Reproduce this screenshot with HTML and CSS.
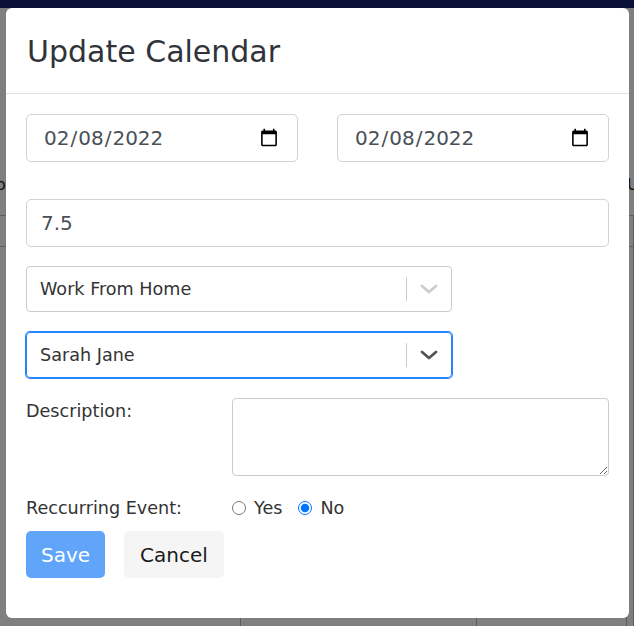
FILE: index.html
```html
<!DOCTYPE html>
<html lang="en">
<head>
    <meta charset="UTF-8">
    <meta name="viewport" content="width=device-width, initial-scale=1.0">
    <title>Update Calendar</title>
    <link rel="stylesheet" href="styles.css">
</head>
<body>

    <div class="page">
        <nav class="navbar"></nav>
        <div class="calendar-bg">
            <div class="bg-row bg-head"><span>o</span><span></span><span></span><span>U</span></div>
            <div class="bg-row"><span></span><span></span><span></span><span></span></div>
            <div class="bg-row bg-tall"><span></span><span></span><span></span><span></span></div>
        </div>
    </div>

    <div class="backdrop">
        <div class="modal">
            <div class="modal-header">
                <h2 class="modal-title">Update Calendar</h2>
            </div>

            <form class="modal-body">
                <div class="date-row">
                    <input type="date" class="form-control" value="2022-02-08">
                    <input type="date" class="form-control" value="2022-02-08">
                </div>

                <input type="number" class="form-control hours" value="7.5" step="0.5">

                <div class="select">
                    <div class="select-value">Work From Home</div>
                    <span class="select-sep"></span>
                    <span class="select-arrow">
                        <svg width="18" height="10" viewBox="0 0 18 10"><polyline points="2,2 9,8 16,2" fill="none" stroke="currentColor" stroke-width="2.8" stroke-linecap="round" stroke-linejoin="round"/></svg>
                    </span>
                </div>

                <div class="select select-focused">
                    <div class="select-value">Sarah Jane</div>
                    <span class="select-sep"></span>
                    <span class="select-arrow">
                        <svg width="18" height="10" viewBox="0 0 18 10"><polyline points="2,2 9,8 16,2" fill="none" stroke="currentColor" stroke-width="2.8" stroke-linecap="round" stroke-linejoin="round"/></svg>
                    </span>
                </div>

                <div class="field-row">
                    <label for="description">Description:</label>
                    <textarea id="description"></textarea>
                </div>

                <div class="field-row radio-row">
                    <label>Reccurring Event:</label>
                    <div class="radios">
                        <label class="radio"><input type="radio" name="recurring" value="yes"> Yes</label>
                        <label class="radio"><input type="radio" name="recurring" value="no" checked> No</label>
                    </div>
                </div>

                <div class="buttons">
                    <button type="button" class="btn btn-save">Save</button>
                    <button type="button" class="btn btn-cancel">Cancel</button>
                </div>
            </form>
        </div>
    </div>

</body>
</html>
```

FILE: styles.css
```css
html, body {
    margin: 0;
    height: 100%;
}

body {
    font-family: "DejaVu Sans", sans-serif;
    background-color: #fff;
    color: #333;
    overflow: hidden;
}

/* page behind the modal */
.navbar {
    height: 8px;
    background-color: #14206f;
}

.calendar-bg {
    padding-top: 152px;
}

.bg-row {
    display: grid;
    grid-template-columns: 241px 236px 150px 7px;
    height: 30px;
    border-top: 1px solid #bbb;
    color: #2a6db0;
    font-size: 16px;
}

.bg-row span {
    border-right: 1px solid #bbb;
}

.bg-head {
    height: 55px;
    border-top: none;
    color: #222;
    line-height: 50px;
}

.bg-head span {
    border-right: none;
}

.bg-head span:first-child {
    text-indent: -4px;
}

.bg-tall {
    height: 400px;
}

/* modal */
.backdrop {
    position: fixed;
    inset: 0;
    background-color: rgba(0, 0, 0, 0.5);
    padding: 8px 5px 8px 6px;
    box-sizing: border-box;
}

.modal {
    background-color: #fff;
    border-radius: 6px;
    height: 100%;
    box-sizing: border-box;
}

.modal-header {
    height: 86px;
    display: flex;
    align-items: center;
    padding: 0 21px;
    border-bottom: 1px solid #dee2e6;
    box-sizing: border-box;
}

.modal-title {
    margin: 2px 0 0;
    font-size: 30px;
    font-weight: normal;
    color: #30343a;
}

.modal-body {
    padding: 20px 20px 0;
}

.form-control {
    display: block;
    width: 100%;
    height: 48px;
    padding: 8px 16px;
    font-family: "DejaVu Sans", sans-serif;
    font-size: 20px;
    color: #495057;
    background-color: #fff;
    border: 1px solid #ced4da;
    border-radius: 5px;
    box-sizing: border-box;
}

.date-row {
    display: grid;
    grid-template-columns: 1fr 1fr;
    gap: 39px;
    margin-bottom: 37px;
}

.hours {
    margin-bottom: 19px;
    padding-left: 14px;
}

.select {
    display: flex;
    align-items: stretch;
    width: 426px;
    height: 46px;
    margin-bottom: 20px;
    border: 1px solid #ccc;
    border-radius: 4px;
    box-sizing: border-box;
    font-size: 17.6px;
}

.select-value {
    flex: 1;
    display: flex;
    align-items: center;
    padding-left: 13px;
    color: #333;
}

.select-sep {
    width: 1px;
    margin: 10px 0;
    background-color: #ccc;
}

.select-arrow {
    width: 44px;
    display: flex;
    align-items: center;
    justify-content: center;
    color: #ccc;
}

.select-focused {
    border-color: #2684ff;
    box-shadow: 0 0 0 1px #2684ff;
}

.select-focused .select-arrow {
    color: #555;
}

.field-row {
    display: grid;
    grid-template-columns: 206px 1fr;
    font-size: 17.6px;
    line-height: 26px;
}

.field-row label {
    color: #333;
}

textarea {
    height: 78px;
    border: 1px solid #ccc;
    border-radius: 4px;
    box-sizing: border-box;
    font-family: "DejaVu Sans", sans-serif;
}

.radio-row {
    margin-top: 19px;
    margin-bottom: 10px;
    align-items: center;
}

.radios {
    display: flex;
    align-items: center;
}

.radio {
    display: flex;
    align-items: center;
    margin-right: 16px;
}

.radio input {
    width: 14px;
    height: 14px;
    margin: 0 8px 0 0;
}

.buttons {
    display: flex;
    gap: 19px;
}

.btn {
    height: 47px;
    padding: 0 15px;
    font-family: "DejaVu Sans", sans-serif;
    font-size: 20px;
    border: none;
    border-radius: 5px;
}

.btn-save {
    background-color: #60a5fa;
    color: #fff;
}

.btn-cancel {
    padding: 0 16px;
    background-color: #f6f5f5;
    color: #1a1a1a;
}
```
